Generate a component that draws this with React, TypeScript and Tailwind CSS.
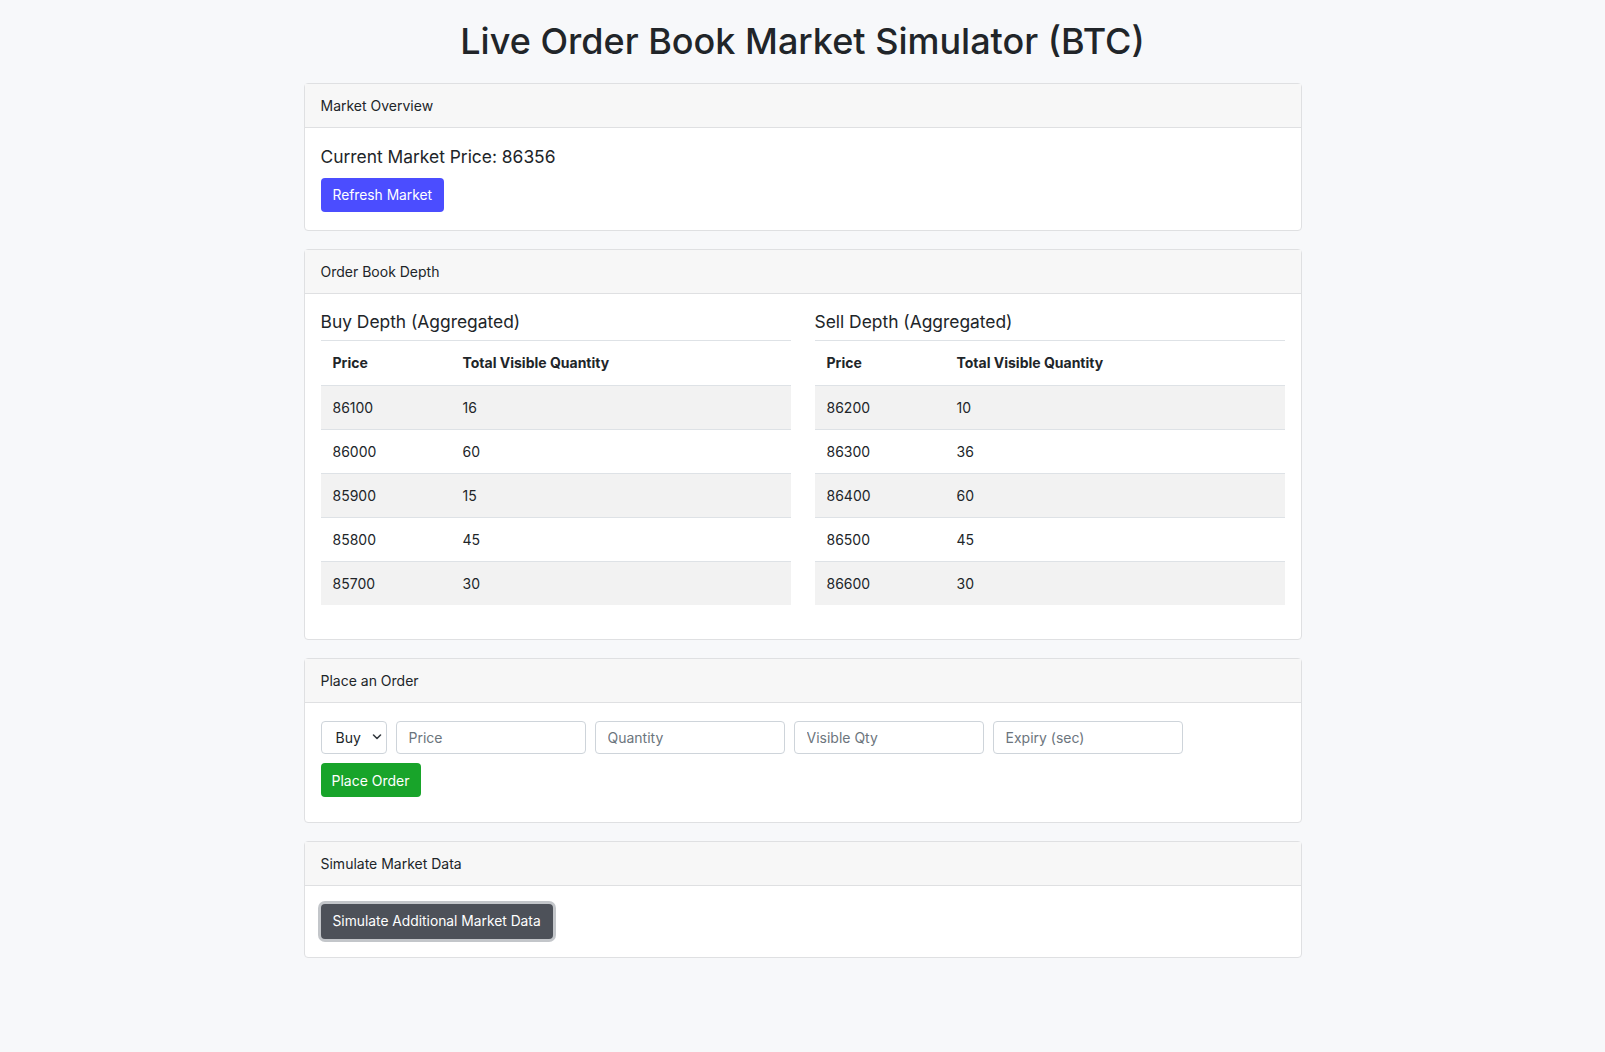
import { useState } from "react";

const buyDepth = [
  { price: 86100, qty: 16 },
  { price: 86000, qty: 60 },
  { price: 85900, qty: 15 },
  { price: 85800, qty: 45 },
  { price: 85700, qty: 30 },
];

const sellDepth = [
  { price: 86200, qty: 10 },
  { price: 86300, qty: 36 },
  { price: 86400, qty: 60 },
  { price: 86500, qty: 45 },
  { price: 86600, qty: 30 },
];

function Card({ title, bodyClass, children }: { title: string; bodyClass: string; children: React.ReactNode }) {
  return (
    <section className="rounded-[4px] border border-[#dfe0e2] bg-white">
      <div className="flex h-[44px] items-center border-b border-[#dfe0e2] bg-[#f7f7f7] px-4 text-[14px] text-[#212529]">
        {title}
      </div>
      <div className={bodyClass}>{children}</div>
    </section>
  );
}

function DepthTable({ heading, rows }: { heading: string; rows: { price: number; qty: number }[] }) {
  return (
    <div>
      <h5 className="mb-[6px] text-[17.4px] leading-6 text-[#212529]">{heading}</h5>
      <table className="mb-4 w-full border-t border-[#dee2e6] text-left text-[14px] text-[#212529]">
        <thead>
          <tr className="border-b border-[#dee2e6]">
            <th className="w-[130px] px-3 py-3 font-bold leading-5">Price</th>
            <th className="px-3 py-3 font-bold leading-5">Total Visible Quantity</th>
          </tr>
        </thead>
        <tbody>
          {rows.map((row, i) => (
            <tr key={row.price} className={i % 2 === 0 ? "bg-[#f2f2f2]" : "bg-white"}>
              <td className={`px-3 py-3 leading-[19px] ${i < rows.length - 1 ? "border-b border-[#dee2e6]" : ""}`}>{row.price}</td>
              <td className={`px-3 py-3 leading-[19px] ${i < rows.length - 1 ? "border-b border-[#dee2e6]" : ""}`}>{row.qty}</td>
            </tr>
          ))}
        </tbody>
      </table>
    </div>
  );
}

export default function App() {
  const [side, setSide] = useState("buy");

  return (
    <main className="min-h-screen bg-[#f7f8fa] pt-5 pb-16 font-['Inter','Liberation_Sans',sans-serif] text-[#212529]">
      <h1 className="mb-5 text-center text-[36px] font-medium leading-[43px] text-[#212529]">
        Live Order Book Market Simulator (BTC)
      </h1>

      <div className="mx-auto flex max-w-[998px] flex-col gap-[18px]">
        <Card title="Market Overview" bodyClass="px-4 pt-4 pb-[18px]">
          <h5 className="mb-2 text-[17.4px] leading-[26px]">Current Market Price: 86356</h5>
          <button className="h-[34px] rounded-[4px] bg-[#4b4dff] px-3 text-[13.8px] text-white">Refresh Market</button>
        </Card>

        <Card title="Order Book Depth" bodyClass="px-4 pt-4 pb-[18px]">
          <div className="grid grid-cols-2 gap-6">
            <DepthTable heading="Buy Depth (Aggregated)" rows={buyDepth} />
            <DepthTable heading="Sell Depth (Aggregated)" rows={sellDepth} />
          </div>
        </Card>

        <Card title="Place an Order" bodyClass="px-4 pt-[18px] pb-[25px]">
          <div className="flex flex-wrap gap-[9px] text-[14px]">
            <div className="relative h-[33px] w-[66px]">
              <select
                value={side}
                onChange={(e) => setSide(e.target.value)}
                className="h-full w-full appearance-none rounded-[4px] border border-[#ced4da] bg-white pl-[14px] text-[14px] text-[#212529]"
              >
                <option value="buy">Buy</option>
                <option value="sell">Sell</option>
              </select>
              <svg className="pointer-events-none absolute right-[5px] top-[12px]" width="10" height="8" viewBox="0 0 10 8" fill="none">
                <path d="M1.5 2l3.5 3.5L8.5 2" stroke="#343a40" strokeWidth="1.6" strokeLinecap="round" strokeLinejoin="round" />
              </svg>
            </div>
            {["Price", "Quantity", "Visible Qty", "Expiry (sec)"].map((p) => (
              <input
                key={p}
                placeholder={p}
                className="h-[33px] w-[190px] rounded-[4px] border border-[#ced4da] bg-white px-3 text-[14px] placeholder:text-[#6c757d]"
              />
            ))}
            <button className="h-[34px] w-[100px] rounded-[4px] bg-[#18a42a] text-[14px] text-white">Place Order</button>
          </div>
        </Card>

        <Card title="Simulate Market Data" bodyClass="px-4 pt-[18px] pb-[18px]">
          <button className="h-[35px] rounded-[4px] bg-[#4d5159] px-3 text-[13.8px] text-white ring-[3px] ring-[#c3c6ca]">
            Simulate Additional Market Data
          </button>
        </Card>
      </div>
    </main>
  );
}
